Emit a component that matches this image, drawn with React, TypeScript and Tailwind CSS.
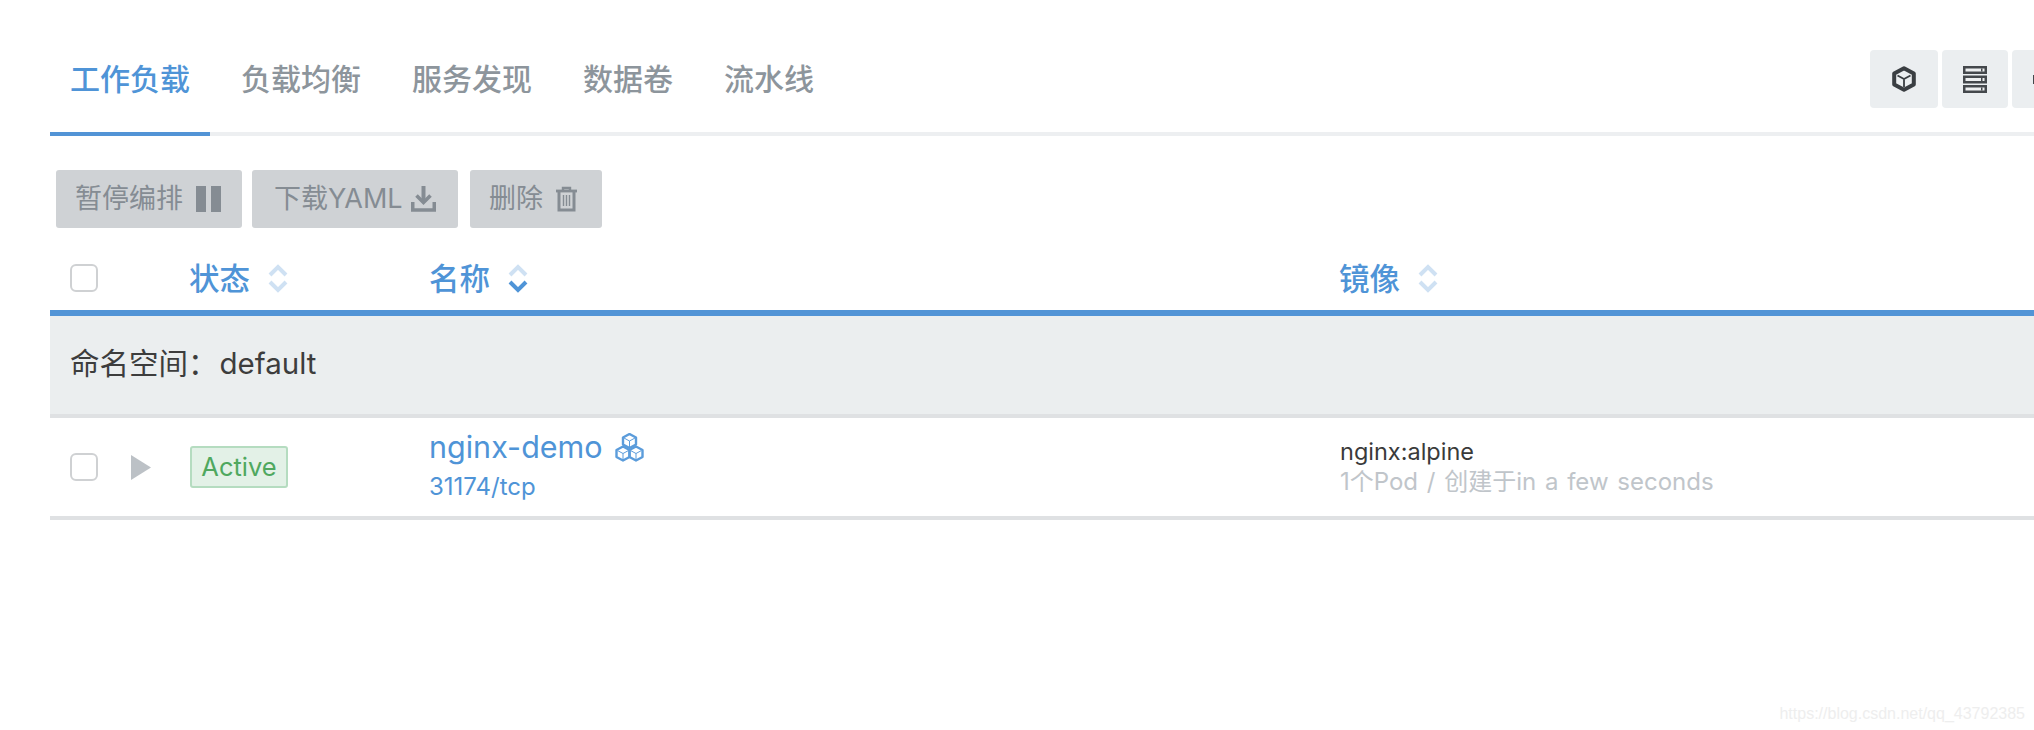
// Workloads list: tabs, bulk actions, and a grouped table.
import type { ReactNode } from "react";

const tabs = ["工作负载", "负载均衡", "服务发现", "数据卷", "流水线"];
const font = "font-['Inter','Noto_Sans_CJK_SC',sans-serif]";

function CubeIcon() {
  return (
    <svg width="24" height="26" viewBox="0 0 24 26" fill="none" stroke="#3a3e42">
      <path d="M12 2.2 L21.8 7.6 V18.4 L12 23.8 L2.2 18.4 V7.6 Z" strokeWidth="4" strokeLinejoin="round" />
      <path d="M5.5 9.5 L12 13 L18.5 9.5 M12 13 V21" strokeWidth="1.8" />
    </svg>
  );
}

function ServerIcon() {
  return (
    <svg width="24" height="27" viewBox="0 0 24 27">
      {[0, 9.5, 19].map((y) => (
        <g key={y}>
          <rect x="0" y={y} width="24" height="8" fill="#44484c" />
          <rect x="2.5" y={y + 2.5} width="19" height="3" fill="#eef0f1" />
          <rect x="18" y={y + 2.5} width="1.5" height="3" fill="#44484c" />
        </g>
      ))}
    </svg>
  );
}

function PauseIcon() {
  return (
    <span className="flex gap-[5px]">
      <span className="h-[26px] w-[10px] bg-[#858c93]" />
      <span className="h-[26px] w-[10px] bg-[#858c93]" />
    </span>
  );
}

function DownloadIcon() {
  return (
    <svg width="25" height="26" viewBox="0 0 25 26" fill="none" stroke="#858c93">
      <path d="M12.5 0 V16" strokeWidth="4" />
      <path d="M5.5 9.5 L12.5 16.5 L19.5 9.5" strokeWidth="3.6" />
      <path d="M1.75 16 V24 H23.25 V16" strokeWidth="3.5" />
    </svg>
  );
}

function TrashIcon() {
  return (
    <svg width="21" height="26" viewBox="0 0 21 26" fill="none" stroke="#858c93">
      <path d="M0 5 H21" strokeWidth="2.8" />
      <path d="M7 5 V2 H14 V5" strokeWidth="2.4" />
      <path d="M3 6 V24 H18 V6" strokeWidth="3" />
      <path d="M7.5 9 V20 M10.5 9 V20 M13.5 9 V20" strokeWidth="1.4" />
    </svg>
  );
}

function CubesIcon() {
  const hex = (x: number, y: number) => (
    <g key={`${x}-${y}`} transform={`translate(${x} ${y})`}>
      <path d="M7.5 0.5 L14 4 V11 L7.5 14.5 L1 11 V4 Z" strokeWidth="2.4" strokeLinejoin="round" />
      <path d="M2 4.5 L7.5 7.5 L13 4.5 M7.5 7.5 V14" strokeWidth="1" />
    </g>
  );
  return (
    <svg width="29" height="29" viewBox="0 0 29 29" fill="none" stroke="#5b9cdb">
      {hex(7, 0.5)}
      {hex(0.5, 13)}
      {hex(13.5, 13)}
    </svg>
  );
}

function SortIcon({ active }: { active?: boolean }) {
  return (
    <svg width="20" height="29" viewBox="0 0 20 29" fill="none" strokeWidth="4">
      <path d="M2 11 L10 3 L18 11" stroke="#cfe1f3" />
      <path d="M2 18 L10 26 L18 18" stroke={active ? "#4f94d7" : "#cfe1f3"} />
    </svg>
  );
}

function Checkbox() {
  return <span className="block h-[28px] w-[28px] rounded-[6px] border-2 border-[#cfd1d3] bg-white" />;
}

function ActionButton({ label, icon, className }: { label: string; icon: ReactNode; className: string }) {
  return (
    <button className={`flex h-[58px] items-center rounded-[3px] bg-[#cfd2d5] text-[27px] text-[#858c93] ${className}`}>
      <span>{label}</span>
      {icon}
    </button>
  );
}

function HeaderCell({ label, active }: { label: string; active?: boolean }) {
  return (
    <div className="-ml-[1px] flex h-[33px] items-center gap-[18px] text-[30.5px] font-medium leading-[33px] text-[#4f94d7]">
      <span>{label}</span>
      <SortIcon active={active} />
    </div>
  );
}

export default function App() {
  return (
    <div className={`relative h-[730px] w-[2034px] overflow-hidden bg-white pl-[50px] ${font}`}>
      <div className="flex h-[136px] items-end justify-between border-b-4 border-[#edeff1]">
        <nav className="-mb-[4px] flex gap-[11px] text-[30px] font-medium leading-none text-[#8d959c]">
          {tabs.map((t, i) => (
            <a
              key={t}
              className={`block border-b-4 px-[20px] pb-[38px] ${
                i === 0 ? "border-[#5294d6] text-[#4f94d7]" : "border-transparent"
              }`}
            >
              {t}
            </a>
          ))}
        </nav>
        <div className="mb-[24px] -mr-[44px] flex gap-[4px]">
          <button className="flex h-[58px] w-[68px] items-center justify-center rounded-[4px] bg-[#ebeef0]">
            <CubeIcon />
          </button>
          <button className="flex h-[58px] w-[66px] items-center justify-center rounded-[4px] bg-[#ebeef0]">
            <ServerIcon />
          </button>
          <button className="flex h-[58px] w-[66px] items-center justify-start rounded-[4px] bg-[#ebeef0] pl-[21px]">
            <span className="h-[9px] w-[10px] bg-[#44484c]" />
          </button>
        </div>
      </div>

      <div className="mt-[34px] flex gap-[10px] pl-[6px]">
        <ActionButton label="暂停编排" icon={<PauseIcon />} className="w-[186px] gap-[13px] pl-[19px]" />
        <ActionButton label="下载YAML" icon={<DownloadIcon />} className="w-[206px] gap-[8px] pl-[22px]" />
        <ActionButton label="删除" icon={<TrashIcon />} className="ml-[2px] w-[132px] gap-[13px] pl-[19px]" />
      </div>

      <div className="mt-[34px] grid h-[54px] grid-cols-[140px_240px_910px_1fr] items-start border-b-[6px] border-[#5294d6]">
        <div className="pl-[20px] pt-[2px]">
          <Checkbox />
        </div>
        <HeaderCell label="状态" />
        <HeaderCell label="名称" active />
        <HeaderCell label="镜像" />
      </div>

      <div className="flex h-[102px] items-center border-b-4 border-[#dfe1e3] bg-[#ebeeef] pb-[3px] pl-[20px] text-[29.5px] text-[#3d3d3d]">
        命名空间：<span className="ml-[2px]">default</span>
      </div>

      <div className="grid h-[102px] grid-cols-[140px_240px_910px_1fr] items-center border-b-4 border-[#dfe1e3]">
        <div className="flex items-center pl-[20px]">
          <Checkbox />
          <svg className="ml-[33px]" width="20" height="25" viewBox="0 0 20 25">
            <path d="M0 0 L20 12.5 L0 25 Z" fill="#bcc1c6" />
          </svg>
        </div>
        <div>
          <span className="inline-flex h-[42px] w-[98px] items-center justify-center rounded-[3px] border-2 border-[#b5dcc0] bg-[#e3f1e7] text-[25.5px] text-[#4fa85f]">
            Active
          </span>
        </div>
        <div className="-ml-[1px] text-[#4f94d7]">
          <div className="flex items-center gap-[12px] text-[30.5px] leading-[38px]">
            <span>nginx-demo</span>
            <CubesIcon />
          </div>
          <div className="mt-[2px] text-[24px] leading-[38px]">31174/tcp</div>
        </div>
        <div>
          <div className="text-[23.5px] leading-[30px] text-[#3a3a3a]">nginx:alpine</div>
          <div className="text-[24px] leading-[30px] text-[#c0c5ca] [word-spacing:2px]">1个Pod / 创建于in a few seconds</div>
        </div>
      </div>

      <div className="absolute right-[9px] top-[702px] font-['Liberation_Sans',sans-serif] text-[16px] text-[#eeeeee]">
        https://blog.csdn.net/qq_43792385
      </div>
    </div>
  );
}
